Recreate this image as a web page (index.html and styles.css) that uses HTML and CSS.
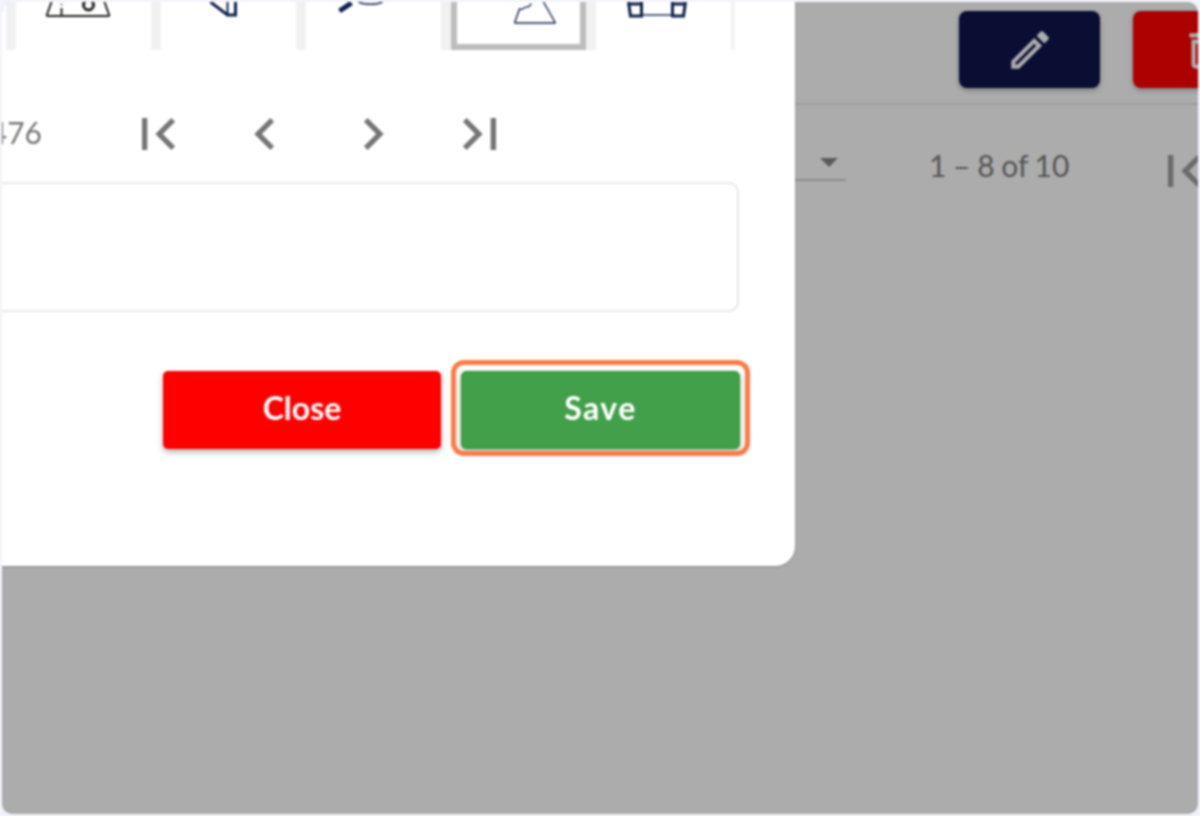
FILE: index.html
```html
<!DOCTYPE html>
<html lang="en">
<head>
    <meta charset="UTF-8">
    <meta name="viewport" content="width=device-width, initial-scale=1.0">
    <title>Save</title>
    <link rel="stylesheet" href="styles.css">
</head>
<body>
    <div class="window">
        <!-- page behind the dialog -->
        <div class="toolbar">
            <button class="tool-btn edit">
                <svg class="tool-icon" viewBox="0 0 24 24"><path d="M3 17.25V21h3.75L17.81 9.94l-3.75-3.75L3 17.25zM5.92 19H5v-.92l9.06-9.06.92.92L5.92 19zM20.71 5.63l-2.34-2.34c-.2-.2-.45-.29-.71-.29s-.51.1-.7.29l-1.83 1.83 3.75 3.75 1.83-1.83c.39-.39.39-1.02 0-1.41z"/></svg>
            </button>
            <button class="tool-btn delete">
                <svg class="tool-icon" viewBox="0 0 24 24"><path d="M6 19c0 1.1.9 2 2 2h8c1.100 0 2-.9 2-2V7H6v12zM8 9h8v10H8V9zm7.500-5l-1-1h-5l-1 1H5v2h14V4h-3.500z"/></svg>
            </button>
        </div>
        <div class="table-pager">
            <div class="page-size"><span class="caret"></span></div>
            <span class="table-range">1 – 8 of 10</span>
            <svg class="pager-icon" viewBox="0 0 24 24"><path d="M18.410 16.590L13.820 12l4.590-4.590L17 6l-6 6 6 6zM6 6h2v12H6z"/></svg>
        </div>

        <!-- dialog -->
        <div class="dialog">
            <div class="thumbs">
                <div class="thumb">
                    <svg class="thumb-art" viewBox="0 0 134 48">
                        <path class="black" d="M30 14h63M35 0l-5 14M88 0l5 14M45 6v8M45 2v1"/>
                        <circle class="black fat" cx="72" cy="3" r="5"/>
                    </svg>
                </div>
                <div class="thumb">
                    <svg class="thumb-art" viewBox="0 0 134 48">
                        <path class="navy fat" d="M49 0l17 13h8V0"/>
                        <path class="navy" d="M66 0v13"/>
                    </svg>
                </div>
                <div class="thumb">
                    <svg class="thumb-art" viewBox="0 0 134 48">
                        <path class="navy heavy" d="M33 9l12-8"/>
                        <path class="navy thin" d="M52 0c6 3 18 3 24 0"/>
                    </svg>
                </div>
                <div class="thumb selected">
                    <svg class="thumb-art" viewBox="0 0 134 48">
                        <path class="navy thin" d="M63 21h41M63 21l5-14c4 2 4-3 8-2 2 0 2-2 4-3M92 0l12 21"/>
                    </svg>
                </div>
                <div class="thumb">
                    <svg class="thumb-art" viewBox="0 0 134 48">
                        <path class="navy fat" d="M32 2h14M32 0l2 14h11V0M76 2h13M76 0v14h11l2-14"/>
                        <path class="navy thin" d="M45 13h31"/>
                    </svg>
                </div>
                <div class="thumb last"></div>
            </div>

            <div class="pager">
                <span class="range">476</span>
                <button class="page-btn"><svg viewBox="0 0 24 24"><path d="M18.410 16.590L13.820 12l4.590-4.590L17 6l-6 6 6 6zM6 6h2v12H6z"/></svg></button>
                <button class="page-btn"><svg viewBox="0 0 24 24"><path d="M15.410 7.410L14 6l-6 6 6 6 1.410-1.410L10.830 12z"/></svg></button>
                <button class="page-btn"><svg viewBox="0 0 24 24"><path d="M10 6L8.590 7.410 13.170 12l-4.580 4.590L10 18l6-6z"/></svg></button>
                <button class="page-btn"><svg viewBox="0 0 24 24"><path d="M5.590 7.410L10.180 12l-4.590 4.590L7 18l6-6-6-6zM16 6h2v12h-2z"/></svg></button>
            </div>

            <div class="field"></div>

            <div class="actions">
                <button class="btn close">Close</button>
                <button class="btn save">Save</button>
            </div>
        </div>
    </div>
</body>
</html>
```

FILE: styles.css
```css
* {
    box-sizing: border-box;
}

body {
    margin: 0;
    padding: 2px;
    height: 816px;
    background-color: #f3f3fb;
    font-family: Lato, "Liberation Sans", sans-serif;
    overflow: hidden;
}

button {
    font-family: inherit;
    border: none;
    padding: 0;
    background: none;
}

/* the shot is an upscaled one, everything in it is a little soft */
.window {
    position: relative;
    height: 812px;
    border-radius: 10px;
    background-color: #acacac;
    overflow: hidden;
    filter: blur(0.8px);
}

/* page behind */
.toolbar {
    display: flex;
    gap: 33px;
    height: 103px;
    padding: 9px 0 0 957px;
    border-bottom: 2px solid #9c9c9c;
}

.tool-btn {
    display: flex;
    flex: none;
    justify-content: center;
    align-items: center;
    width: 141px;
    height: 77px;
    border-radius: 8px;
    box-shadow: 0 2px 5px rgba(0, 0, 0, 0.3);
}

.edit {
    background-color: #0a0e33;
}

.delete {
    background-color: #ad0000;
}

.tool-icon {
    width: 50px;
    height: 50px;
    fill: #acacac;
}

.table-pager {
    display: flex;
    align-items: flex-start;
    padding-left: 698px;
    height: 80px;
}

.page-size {
    position: relative;
    flex: none;
    width: 146px;
    height: 76px;
    border-bottom: 2px solid #8a8a8a;
}

.caret {
    position: absolute;
    right: 8px;
    top: 53px;
    border-left: 9px solid transparent;
    border-right: 9px solid transparent;
    border-top: 9px solid #5a5a5a;
}

.table-range {
    flex: none;
    margin: 41px 0 0 83px;
    width: 141px;
    font-size: 30px;
    line-height: 38px;
    word-spacing: -1px;
    color: #555;
    white-space: nowrap;
}

.pager-icon {
    flex: none;
    width: 64px;
    height: 64px;
    margin: 34px 0 0 82px;
    fill: #6b6b6b;
}

/* dialog */
.dialog {
    position: absolute;
    top: 0;
    left: 0;
    width: 793px;
    height: 564px;
    display: flex;
    flex-direction: column;
    background-color: #fff;
    border-bottom-right-radius: 20px;
    box-shadow: 0 1px 2px rgba(0, 0, 0, 0.2);
}

.thumbs {
    display: flex;
    flex: none;
    height: 48px;
    padding-left: 4px;
}

.thumb {
    flex: none;
    width: 145px;
    border-left: 10px solid #f1f1f1;
}

.thumb.selected .thumb-art {
    box-shadow: inset 6px 0 0 #bdbdbd, inset -6px 0 0 #bdbdbd, inset 0 -6px 0 #bdbdbd;
}

.thumb.last {
    width: 5px;
    border-left: 0;
    background: linear-gradient(to right, #ececec, #fff);
}

.thumb-art {
    display: block;
    width: 135px;
    height: 48px;
    fill: none;
    stroke-width: 2;
}

.black {
    stroke: #222;
}

.navy {
    stroke: #0e2149;
}

.fat {
    stroke-width: 3;
}

.heavy {
    stroke-width: 5;
}

.thin {
    stroke-width: 1.400;
}

.pager {
    display: flex;
    flex: none;
    align-items: center;
    height: 64px;
    margin-top: 52px;
}

.range {
    display: flex;
    flex: none;
    justify-content: flex-end;
    width: 40px;
    margin: 0 62px 4px 0;
    font-size: 30px;
    color: #777;
}

.page-btn {
    display: flex;
    flex: none;
    justify-content: center;
    width: 107.500px;
    height: 64px;
}

.page-btn svg {
    width: 64px;
    height: 64px;
    fill: #757575;
}

.field {
    flex: none;
    height: 130px;
    margin: 16px 56px 0 -20px;
    border: 2px solid #e8e8e8;
    border-radius: 10px;
}

.actions {
    display: flex;
    justify-content: flex-end;
    gap: 20px;
    margin-top: 59px;
    padding-right: 55px;
}

.btn {
    height: 78px;
    width: 278px;
    padding-bottom: 5px;
    border-radius: 5px;
    font-size: 32px;
    font-weight: 700;
    color: #fff;
    box-shadow: 0 3px 6px rgba(0, 0, 0, 0.3);
}

.close {
    background-color: #f00;
}

.save {
    position: relative;
    width: 279px;
    letter-spacing: 1.500px;
    background-color: #43a04a;
    border: 1px solid #239a2c;
}

/* highlight ring from the screenshot tool */
.save::after {
    content: "";
    position: absolute;
    top: -12px;
    right: -11px;
    bottom: -8px;
    left: -11px;
    border: 5px solid #ff7a45;
    border-radius: 13px;
}
```
